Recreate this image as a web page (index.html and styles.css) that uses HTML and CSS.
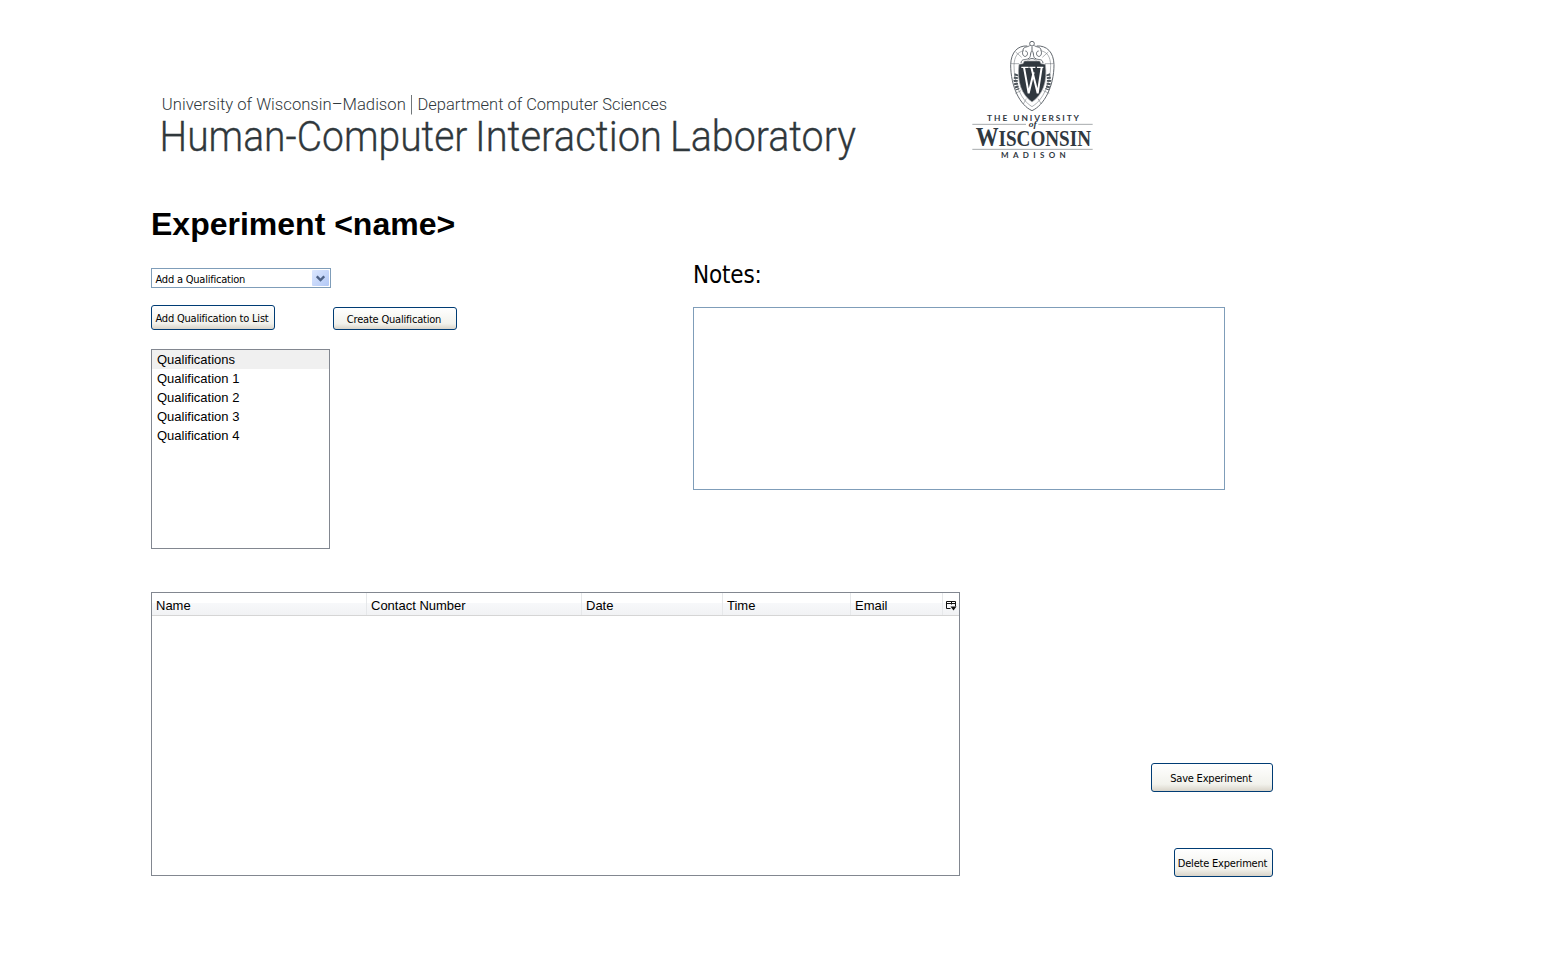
FILE: index.html
```
<!DOCTYPE html>
<html lang="en">
<head>
<meta charset="utf-8">
<title>Experiment</title>
<link rel="stylesheet" href="styles.css">
</head>
<body>
<header class="banner">
  <svg class="wordmark" viewBox="150 85 720 85" role="img" aria-label="Human-Computer Interaction Laboratory">
    <g class="dept">
      <text x="161.8" y="110" textLength="244" lengthAdjust="spacingAndGlyphs">University of Wisconsin–Madison</text>
      <text x="417.500" y="110" textLength="249.500" lengthAdjust="spacingAndGlyphs">Department of Computer Sciences</text>
    </g>
    <path d="M411.5 95v19.500" stroke="#71777a" stroke-width="1"/>
    <g class="lab">
      <text x="159.500" y="151" textLength="308" lengthAdjust="spacingAndGlyphs">Human-Computer</text>
      <text x="475" y="151" textLength="187" lengthAdjust="spacingAndGlyphs">Interaction</text>
      <text x="670" y="151" textLength="186" lengthAdjust="spacingAndGlyphs">Laboratory</text>
    </g>
  </svg>
  <svg class="crest" viewBox="0 0 435 420" role="img" aria-label="The University of Wisconsin Madison">
    <g fill="none" stroke="#63696f" stroke-width="3">
      <path d="M202 48C174 46 153 66 152 104c0 66 28 122 64 138 36-16 66-72 66-138-1-38-22-58-52-56" fill="#fff"/>
      <path d="M192 62c-20 4-29 18-30 44 0 56 22 106 54 124 32-18 56-68 56-124-1-26-10-40-30-44" stroke-width="1.500"/>
      <circle cx="216" cy="41" r="7"/>
      <path d="M209 47c-7 5-20 3-20 14M223 47c7 5 20 3 20 14M216 50v12"/>
      <path d="M189 61c-4 10 1 20 8 18 8-3 7-16-1-16M243 61c4 10-1 20-8 18-8-3-7-16 1-16M216 62c-8 8 0 20-13 25-9 3-18-1-20 12M216 62c8 8 0 20 13 25 9 3 18-1 20 12M204 91c5-7 19-7 24 0"/>
      <path d="M167 66l18 16M265 66l-18 16M153 101h24M281 101h-26M158 151h14M276 151h-14M166 190l17-8M268 190l-18-8M190 222l9-16M244 222l-10-16" stroke-width="1.500"/>
      <path d="M170 132c-5 15-3 33 3 47M264 132c5 15 3 33-3 47" stroke="#4d555b" stroke-width="12" stroke-dasharray="6 3"/>
    </g>
    <path d="M193 93h46l4 8 13 2c7 53-8 91-40 113-31-22-46-60-39-113l12-2z" fill="#30383f" stroke="#a7abae" stroke-width="2"/>
    <path d="M184 112h22M208 112h18M231 112h19" stroke="#fff" stroke-width="4"/>
    <path d="M192 112l14 78 15-63M214 112l19 78 12-78" fill="none" stroke="#fff" stroke-width="6" stroke-linejoin="bevel"/>
    <path d="M37 283h161M235 283h163M37 358h361" stroke="#a6aaad" stroke-width="3"/>
    <g class="crest-text">
      <text x="81" y="272" font-size="25" textLength="61">THE</text>
      <text x="160" y="272" font-size="25" textLength="197">UNIVERSITY</text>
      <text class="crest-of" x="206" y="291" font-size="24" textLength="24" lengthAdjust="spacingAndGlyphs">of</text>
      <text class="crest-name" x="47" y="347" font-size="67" textLength="346" lengthAdjust="spacingAndGlyphs"><tspan font-size="80">W</tspan>ISCONSIN</text>
      <text x="123" y="383" font-size="24" textLength="194">MADISON</text>
    </g>
  </svg>
</header>
<main class="page">
  <h1 class="title">Experiment &lt;name&gt;</h1>
  <div class="columns">
    <section class="qualifications">
      <div class="combo"><span class="combo-label">Add a Qualification</span>
        <span class="combo-arrow"><svg width="9" height="7" viewBox="0 0 9 7"><path d="M.8 1.300L4.500 5 8.200 1.300" fill="none" stroke="#4d6185" stroke-width="2.300"/></svg></span>
      </div>
      <div class="actions">
        <button class="btn btn-add"><span>Add Qualification to List</span></button>
        <button class="btn btn-create"><span>Create Qualification</span></button>
      </div>
      <ul class="list">
        <li class="list-head">Qualifications</li>
        <li>Qualification 1</li>
        <li>Qualification 2</li>
        <li>Qualification 3</li>
        <li>Qualification 4</li>
      </ul>
    </section>
    <section class="notes">
      <h2 class="notes-title">Notes:</h2>
      <div class="notes-box"></div>
    </section>
  </div>
  <div class="lower">
    <div class="table">
      <div class="table-head">
        <span>Name</span><span>Contact Number</span><span>Date</span><span>Time</span><span>Email</span>
        <span class="picker"><svg width="11" height="10" viewBox="0 0 11 10"><path d="M.5.500h9v5M.5.500v7h4M.5 2.500h9M5.500.500v3" fill="none" stroke="#111"/><path d="M4.500 5.500h6L7.500 9.500z" fill="#111"/></svg></span>
      </div>
    </div>
    <div class="side">
      <button class="btn btn-save"><span>Save Experiment</span></button>
      <button class="btn btn-delete"><span>Delete Experiment</span></button>
    </div>
  </div>
</main>
</body>
</html>
```
FILE: styles.css
```
* { box-sizing: border-box; }
body {
  margin: 0;
  background: #fff;
  color: #000;
  font-family: "Liberation Sans", Arial, sans-serif;
}
.banner { display: flex; height: 200px; padding-left: 150px; }
.wordmark { width: 720px; height: 85px; margin-top: 85px; }
.crest { width: 145px; height: 140px; margin: 30px 0 0 90px; }
.dept, .lab { font-family: Roboto, sans-serif; font-weight: 300; fill: #30383c; }
.dept { font-size: 17.3px; }
.lab { font-size: 42px; stroke: #30383c; stroke-width: 0.3px; }
.crest-text { font-family: Lato, sans-serif; font-weight: 700; fill: #30383f; }
.crest-name { font-family: "Liberation Serif", serif; font-weight: 700; }
.crest-of { font-family: "Liberation Serif", serif; font-style: italic; }

.page { padding-left: 151px; }
.title { margin: 0; height: 61px; padding-top: 6px; font-size: 32px; line-height: 36px; }
.columns { display: flex; height: 331px; }
.qualifications { width: 542px; padding-top: 7px; }
.combo, .btn, .notes-title {
  font-family: "DejaVu Sans Condensed", "DejaVu Sans", sans-serif;
  font-stretch: condensed;
  font-weight: 400;
}
.combo {
  display: flex;
  justify-content: space-between;
  width: 180px;
  height: 20px;
  padding: 1px 1px 1px 3.500px;
  border: 1px solid #7f9db9;
  font-size: 11px;
  line-height: 19px;
}
.combo-label { letter-spacing: -0.22px; }
.combo-arrow {
  display: grid;
  place-items: center;
  width: 17px;
  height: 16px;
  border-radius: 1px;
  background: linear-gradient(135deg, #dce7fe, #b2c8f6);
}
.actions { display: flex; align-items: flex-end; gap: 58px; height: 42px; }
.btn {
  display: flex;
  align-items: center;
  justify-content: center;
  padding: 2px 0 0;
  border: 1px solid #003c74;
  border-radius: 3px;
  background: linear-gradient(#fff, #f2f2ec 75%, #d9d4c9);
  color: #000;
  font-size: 11px;
  letter-spacing: -0.2px;
  white-space: nowrap;
}
.btn-add { width: 124px; height: 25px; }
.btn-add span { padding-right: 2px; }
.btn-create { width: 124px; height: 23px; }
.btn-create span { padding-right: 2px; }
.list {
  width: 179px;
  height: 200px;
  margin: 19px 0 0;
  padding: 0;
  border: 1px solid #828790;
  list-style: none;
  font-size: 13px;
  line-height: 19px;
}
.list li { height: 19px; padding-left: 5px; }
.list .list-head { background: #f0f0f0; }
.notes-title { margin: 0; height: 46px; font-size: 24px; line-height: 29px; letter-spacing: -0.15px; }
.notes-box { width: 532px; height: 183px; border: 1px solid #7f9db9; }
.lower { display: flex; gap: 191px; }
.table { width: 809px; height: 284px; border: 1px solid #828790; }
.table-head {
  display: grid;
  grid-template-columns: 215px 215px 141px 128px 92px 16px;
  height: 23px;
  border-bottom: 1px solid #d5d5d5;
  background: linear-gradient(#fff 45%, #f7f8fa 46%, #f1f2f4);
  font-size: 13px;
}
.table-head span { height: 22px; padding: 1px 0 0 4px; border-right: 1px solid #e6e8ea; line-height: 24px; }
.table-head .picker { display: flex; align-items: center; padding: 4px 0 0 3px; border-right: 0; }
.side { display: flex; flex-direction: column; align-items: flex-end; gap: 56px; width: 122px; padding-top: 171px; }
.btn-save { width: 122px; height: 29px; }
.btn-delete { width: 99px; height: 29px; }
.btn-save span, .btn-delete span { padding-right: 2px; }
```
